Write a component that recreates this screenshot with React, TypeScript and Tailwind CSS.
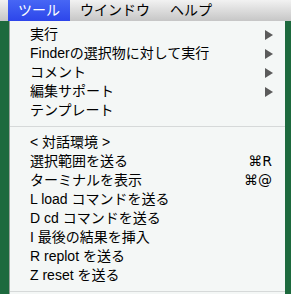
const jp = "font-['Liberation_Sans','Noto_Sans_CJK_JP',sans-serif]";

type Item = { label: string; sub?: boolean; key?: string };

const group1: Item[] = [
  { label: "実行", sub: true },
  { label: "Finderの選択物に対して実行", sub: true },
  { label: "コメント", sub: true },
  { label: "編集サポート", sub: true },
  { label: "テンプレート" },
];

const group2: Item[] = [
  { label: "< 対話環境 >" },
  { label: "選択範囲を送る", key: "⌘R" },
  { label: "ターミナルを表示", key: "⌘@" },
  { label: "L load コマンドを送る" },
  { label: "D cd コマンドを送る" },
  { label: "I 最後の結果を挿入" },
  { label: "R replot を送る" },
  { label: "Z reset を送る" },
];

function Row({ item }: { item: Item }) {
  return (
    <div className="flex h-[19px] items-center justify-between pl-[20px] pr-[11px] text-[14px] leading-[19px] text-black">
      <span className="whitespace-nowrap">{item.label}</span>
      {item.sub && (
        <svg width="8" height="10" viewBox="0 0 8 10" className="mr-[1px]">
          <path d="M0 0 L8 5 L0 10 Z" fill="#5b5b5b" />
        </svg>
      )}
      {item.key && <span className="mr-[2px] font-['DejaVu_Sans',sans-serif] text-[14px]">{item.key}</span>}
    </div>
  );
}

function Separator() {
  return <div className="my-[6px] h-px bg-[#d6d9d9]" />;
}

export default function App() {
  return (
    <div className={`h-[294px] w-[291px] overflow-hidden bg-[#1d6a3e] ${jp}`}>
      <div className="flex h-[21px] items-stretch bg-gradient-to-b from-[#f2f2f2] to-[#c6c6c6] text-[14px] leading-[21px]">
        <div className="ml-[8px] bg-gradient-to-b from-[#4766f5] to-[#2d45ea] px-[10px] text-white">ツール</div>
        <div className="px-[10px] text-black">ウインドウ</div>
        <div className="px-[10px] text-black">ヘルプ</div>
      </div>
      <div className="flex pl-[9px] pr-[6px]">
        <div className="flex-1 border-l border-[#9aa49e] bg-[#f4f7f6] pt-[4px]">
          {group1.map((item) => (
            <Row key={item.label} item={item} />
          ))}
          <Separator />
          {group2.map((item) => (
            <Row key={item.label} item={item} />
          ))}
          <Separator />
        </div>
      </div>
    </div>
  );
}
